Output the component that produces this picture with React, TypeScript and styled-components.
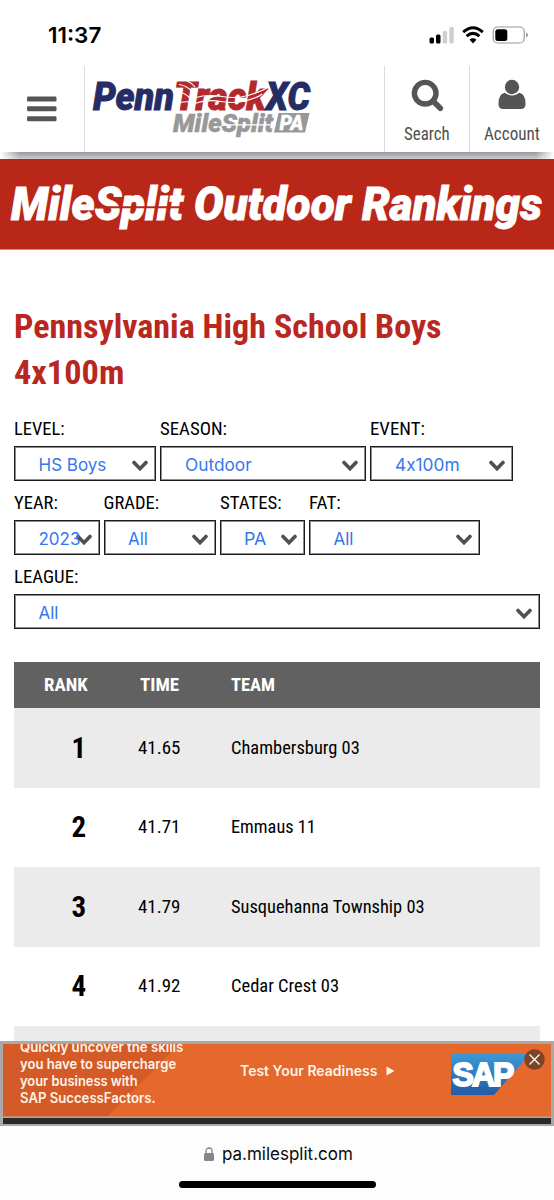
import React, { useLayoutEffect, useRef, useState } from "react";
import styled, { createGlobalStyle } from "styled-components";

const Global = createGlobalStyle`
  *, *::before, *::after { box-sizing: border-box; }
  body { margin: 0; background: #fff; overflow: hidden; }
`;

const condensed = `"Roboto Condensed", Roboto, sans-serif`;
const system = `Inter, "Liberation Sans", sans-serif`;

const Screen = styled.div`
  width: 554px;
  height: 1200px;
  display: flex;
  flex-direction: column;
  overflow: hidden;
  background: #fff;
  color: #111;
  font-family: ${condensed};
`;

const FitBox = styled.span<{ $width: number }>`
  display: block;
  flex: none;
  width: ${(p) => p.$width}px;
  white-space: nowrap;
`;

const FitInner = styled.span`
  display: inline-block;
  vertical-align: top;
  transform-origin: 0 50%;
`;

/* Sets a line of text to an exact measure by narrowing its glyphs. */
function Fit({ width, children }: { width: number; children: React.ReactNode }) {
  const ref = useRef<HTMLSpanElement>(null);
  const [scale, setScale] = useState(1);
  useLayoutEffect(() => {
    if (ref.current && ref.current.offsetWidth) setScale(width / ref.current.offsetWidth);
  }, [width]);
  return (
    <FitBox $width={width}>
      <FitInner ref={ref} style={{ transform: `scaleX(${scale})` }}>
        {children}
      </FitInner>
    </FitBox>
  );
}

const StatusBar = styled.div`
  flex: none;
  height: 66px;
  padding: 4px 26px 0 48px;
  display: flex;
  align-items: center;
  justify-content: space-between;
  font: 600 22px/28px ${system};
  color: #000;
`;

const Header = styled.header`
  flex: none;
  height: 86px;
  display: flex;
  position: relative;
  z-index: 1;
  background: #fff;
`;

const HeaderShadow = styled.div`
  flex: none;
  height: 7px;
  background: linear-gradient(90deg, #fff 0, transparent 20px, transparent 536px, #fff 554px),
    linear-gradient(#9a9aa2, #b4b4ba 55%, #d4cccc);
`;

const MenuButton = styled.button`
  width: 85px;
  padding: 0 0 1px 27px;
  border: 0;
  border-right: 1px solid #dcdce0;
  background: none;
  display: flex;
  align-items: center;
`;

const LogoLink = styled.div`
  flex: 1;
`;

const HeaderAction = styled.button`
  width: 85px;
  padding: 12px 0 0;
  border: 0;
  border-left: 1px solid #dcdce0;
  background: none;
  display: flex;
  flex-direction: column;
  align-items: center;
  gap: 10px;
  font: 400 18px/24px ${condensed};
  color: #505050;
`;

const Banner = styled.div`
  flex: none;
  height: 91px;
  background: #b92719;
  border-bottom: 1px solid #d98780;
`;

const Content = styled.main`
  height: 791px;
  flex: none;
  padding: 53px 14px 0;
  overflow: hidden;
`;

const Title = styled.h1`
  margin: 0;
  font: 700 34px/46px ${condensed};
  color: #b92720;
`;

const Filters = styled.form`
  padding-top: 19px;
`;

const FilterRow = styled.div`
  display: flex;
  gap: 4px;
  height: 74px;
`;

const Field = styled.label<{ $width: number }>`
  flex: none;
  width: ${(p) => p.$width}px;
  font: 400 18.5px/30px ${condensed};
  color: #000;
`;

const SelectBox = styled.span`
  display: flex;
  align-items: center;
  justify-content: space-between;
  height: 35px;
  margin-top: 2px;
  padding: 2px 7px 0 23.5px;
  border: 1px solid #1b1b1d;
  box-shadow: inset 0 0 0 1px rgba(27, 27, 29, 0.5);
  font: 400 17px/24px ${system};
  font-feature-settings: "calt" 0;
  color: #3577ee;
  svg { flex: none; margin: 2px 0 0 -8px; }
`;

const Table = styled.div`
  margin-top: 26px;
`;

const TableHead = styled.div`
  display: flex;
  align-items: center;
  height: 46px;
  background: #616161;
  color: #fff;
  font: 700 18px/24px ${condensed};
`;

const TableRow = styled.div<{ $shaded: boolean }>`
  display: flex;
  align-items: center;
  height: 79.5px;
  background: ${(p) => (p.$shaded ? "#ebebeb" : "#fff")};
  font: 400 18.5px/24px ${condensed};
  color: #000;
`;

const RankCell = styled.div<{ $inset?: number }>`
  display: flex;
  justify-content: center;
  flex: none;
  width: 104px;
  padding-left: ${(p) => p.$inset ?? 0}px;
`;

const TimeCell = styled.div`
  display: flex;
  justify-content: center;
  flex: none;
  width: 82px;
  margin-right: 31px;
`;

const TeamCell = styled.div`
  flex: 1;
`;

const Rank = styled.strong`
  font: 700 29px/32px ${condensed};
`;

const Ad = styled.aside`
  flex: none;
  height: 85px;
  padding: 3px 3px 0;
  background: #a9a9a9;
`;

const AdBody = styled.div`
  height: 73px;
  position: relative;
  overflow: hidden;
  display: flex;
  border-bottom: 1px solid #c08a6c;
  background: linear-gradient(135deg, #d45b27 0, #d45b27 124px, #e5682c 126px);
  color: #fff3e8;
  font: 600 14px/17px ${system};
`;

const AdCopy = styled.div`
  width: 220px;
  padding-left: 17px;
  margin-top: -6.5px;
`;

const AdAction = styled.div`
  width: 228px;
  padding: 18px 0 0 17px;
  display: flex;
  gap: 9px;
  svg { margin-top: 4px; }
`;

const AdSap = styled.div`
  padding-top: 9px;
`;

const AdFoot = styled.div`
  height: 6px;
  margin-top: 1px;
  background: #292929;
`;

const CloseButton = styled.button`
  position: absolute;
  right: 6px;
  top: 5px;
  width: 21px;
  height: 21px;
  padding: 0;
  border: 0;
  background: none;
`;

const BrowserBar = styled.footer`
  flex: 1;
  padding-top: 15px;
  display: flex;
  flex-direction: column;
  align-items: center;
  background: #fdfdfd;
`;

const Address = styled.div`
  display: flex;
  align-items: center;
  gap: 8px;
  padding-left: 2px;
  font: 400 17.5px/26px ${system};
  color: #0b0b0b;
`;

const HomeIndicator = styled.div`
  width: 197px;
  height: 7px;
  margin-top: 14px;
  border-radius: 4px;
  background: #000;
`;

const Chevron = () => (
  <svg width="16" height="12" viewBox="0 0 16 12">
    <path d="M2 2.5 8 8.7 14 2.5" fill="none" stroke="#505050" strokeWidth="3.6" strokeLinecap="round" />
  </svg>
);

type LetterProps = { x: number; y: number; w: number; size: number; fill: string; weight?: number; children: string };
const Letters = ({ x, y, w, size, fill, weight = 0.5, children }: LetterProps) => (
  <text x={x} y={y} textLength={w} lengthAdjust="spacingAndGlyphs" fill={fill} stroke={fill} strokeWidth={weight} fontFamily="Roboto, sans-serif" fontWeight="900" fontStyle="italic" fontSize={size}>
    {children}
  </text>
);

const SiteLogo = () => (
  <svg width="299" height="86" viewBox="85 66 299 86" display="block">
    <Letters x={93} y={109.9} w={81} size={39} weight={0.9} fill="#252c66">Penn</Letters>
    <Letters x={174} y={109.9} w={92} size={39} weight={0.9} fill="#b3282c">Track</Letters>
    <Letters x={266} y={109.9} w={44} size={39} weight={0.9} fill="#252c66">XC</Letters>
    <g fill="none" stroke="#fff" strokeWidth="1.1">
      <path d="M179 84.500q8 1 14 8M187 81q5 2 8 6M177 92q7 0 13 6" />
      <path d="M176 104q7-3 14-2M194 98q14-4 28-1.500t26-1T267 88" />
      <path d="M193 104q14-5 28-2.500t26-1T262 94" />
    </g>
    <Letters x={173} y={131.5} w={100} size={26} fill="#989898">MileSplit</Letters>
    <path d="M222 124.800h52" stroke="#fff" strokeWidth="1.300" />
    <path d="M278.500 113h31l-4.500 19.500h-31z" fill="#989898" />
    <Letters x={279.500} y={129.500} w={24} size={19.500} weight={0.3} fill="#fff">PA</Letters>
  </svg>
);

const BannerTitle = () => (
  <svg width="554" height="90" viewBox="0 159 554 90" display="block">
    <Letters x={11} y={219.900} w={172} size={46} weight={0.900} fill="#fff">MileSplit</Letters>
    <path d="M97 207.300h87" stroke="#b92719" strokeWidth="2" />
    <Letters x={194} y={219.900} w={157} size={46} weight={0.900} fill="#fff">Outdoor</Letters>
    <Letters x={362} y={219.900} w={180} size={46} weight={0.900} fill="#fff">Rankings</Letters>
  </svg>
);

const StatusIcons = () => (
  <svg width="100" height="20" viewBox="428 25 100 20">
    <rect x="429.500" y="37.500" width="4.500" height="6" rx="1.500" />
    <rect x="436" y="34.500" width="4.500" height="9" rx="1.500" />
    <rect x="442.700" y="31" width="4.500" height="12.500" rx="1.500" fill="#cfcfcf" />
    <rect x="449.300" y="27" width="4.500" height="16.500" rx="1.500" fill="#cfcfcf" />
    <g fill="none" stroke="#000" strokeWidth="3">
      <path d="M463.200 32.200q9.800-8.800 19.600 0" />
      <path d="M466.600 36.200q6.400-5.600 12.800 0" />
    </g>
    <path d="M469.500 39.700q3.500-2.800 7 0L473 43.500z" />
    <rect x="493.200" y="27" width="31" height="16" rx="4.500" fill="none" stroke="#999" strokeWidth="1.200" />
    <rect x="495.300" y="29.200" width="12" height="11.700" rx="2.500" />
    <path d="M526 32.500q2 .7 2 2.500t-2 2.500z" fill="#999" />
  </svg>
);

const SapLogo = () => (
  <svg width="80" height="42" viewBox="0 0 80 42" display="block">
    <defs>
      <linearGradient id="sapBlue" x1="0" y1="0" x2="0" y2="1">
        <stop offset="0" stopColor="#3d9bd6" />
        <stop offset="1" stopColor="#235ba6" />
      </linearGradient>
    </defs>
    <path d="M0 0h80L43 42H0z" fill="url(#sapBlue)" />
    <text x="1.500" y="33" textLength="60" lengthAdjust="spacingAndGlyphs" fill="#fff" stroke="#fff" strokeWidth="2" fontFamily="Liberation Sans, sans-serif" fontWeight="700" fontSize="34" letterSpacing="-2">SAP</text>
  </svg>
);

type FilterDef = { label: string; lw: number; value: string; vw: number; width: number };
const filters: FilterDef[][] = [
  [
    { label: "LEVEL:", lw: 51, value: "HS Boys", vw: 68, width: 142 },
    { label: "SEASON:", lw: 67, value: "Outdoor", vw: 67, width: 206 },
    { label: "EVENT:", lw: 55, value: "4x100m", vw: 65, width: 142.5 },
  ],
  [
    { label: "YEAR:", lw: 44, value: "2023", vw: 42, width: 85.5 },
    { label: "GRADE:", lw: 56, value: "All", vw: 20, width: 112 },
    { label: "STATES:", lw: 62, value: "PA", vw: 22, width: 85.5 },
    { label: "FAT:", lw: 32, value: "All", vw: 20, width: 171 },
  ],
  [{ label: "LEAGUE:", lw: 64, value: "All", vw: 20, width: 526 }],
];

const results = [
  { time: "41.65", team: "Chambersburg 03", w: 128.5 },
  { time: "41.71", team: "Emmaus 11", w: 85 },
  { time: "41.79", team: "Susquehanna Township 03", w: 194 },
  { time: "41.92", team: "Cedar Crest 03", w: 108 },
];

export default function App() {
  return (
    <Screen>
      <Global />
      <StatusBar>
        <Fit width={53}>11:37</Fit>
        <StatusIcons />
      </StatusBar>
      <Header>
        <MenuButton aria-label="Menu">
          <svg width="30" height="26" viewBox="0 0 30 26" fill="#555">
            <rect y=".5" width="29.500" height="5" rx="1.300" />
            <rect y="10.300" width="29.500" height="5" rx="1.300" />
            <rect y="20.200" width="29.500" height="5" rx="1.300" />
          </svg>
        </MenuButton>
        <LogoLink><SiteLogo /></LogoLink>
        <HeaderAction>
          <svg width="33" height="34" viewBox="0 0 33 34" fill="none" stroke="#555">
            <circle cx="14.200" cy="15.200" r="10.800" strokeWidth="5.400" />
            <path d="m22.500 23.500 6.800 6.800" strokeWidth="5.600" strokeLinecap="round" />
          </svg>
          <Fit width={46}>Search</Fit>
        </HeaderAction>
        <HeaderAction>
          <svg width="28" height="34" viewBox="0 0 28 34" fill="#555">
            <circle cx="14" cy="9" r="7.200" />
            <path d="M6.500 14.800q7.500 5.400 15 0Q27.500 16 27.500 26q0 5-4.500 5H5q-4.500 0-4.500-5 0-10 6-11.200z" />
          </svg>
          <Fit width={56}>Account</Fit>
        </HeaderAction>
      </Header>
      <HeaderShadow />
      <Banner><BannerTitle /></Banner>
      <Content>
        <Title>
          <Fit width={428}>Pennsylvania High School Boys</Fit>
          <Fit width={110}>4x100m</Fit>
        </Title>
        <Filters>
          {filters.map((row, i) => (
            <FilterRow key={i}>
              {row.map((f) => (
                <Field key={f.label} $width={f.width}>
                  <Fit width={f.lw}>{f.label}</Fit>
                  <SelectBox>
                    <Fit width={f.vw}>{f.value}</Fit>
                    <Chevron />
                  </SelectBox>
                </Field>
              ))}
            </FilterRow>
          ))}
        </Filters>
        <Table>
          <TableHead>
            <RankCell><Fit width={44}>RANK</Fit></RankCell>
            <TimeCell><Fit width={39}>TIME</Fit></TimeCell>
            <TeamCell><Fit width={44}>TEAM</Fit></TeamCell>
          </TableHead>
          {results.map((r, i) => (
            <TableRow key={r.team} $shaded={i % 2 === 0}>
              <RankCell $inset={26}><Rank><Fit width={15}>{i + 1}</Fit></Rank></RankCell>
              <TimeCell><Fit width={42}>{r.time}</Fit></TimeCell>
              <TeamCell><Fit width={r.w}>{r.team}</Fit></TeamCell>
            </TableRow>
          ))}
          <TableRow $shaded />
        </Table>
      </Content>
      <Ad>
        <AdBody>
          <AdCopy>
            <Fit width={163}>Quickly uncover the skills</Fit>
            <Fit width={156}>you have to supercharge</Fit>
            <Fit width={118}>your business with</Fit>
            <Fit width={136}>SAP SuccessFactors.</Fit>
          </AdCopy>
          <AdAction>
            <Fit width={137}>Test Your Readiness</Fit>
            <svg width="9" height="10" viewBox="0 0 9 10"><path d="M.5.500 8.500 5 .5 9.500z" fill="#fff3e8" /></svg>
          </AdAction>
          <AdSap><SapLogo /></AdSap>
          <CloseButton aria-label="Close">
            <svg width="21" height="21" viewBox="0 0 21 21" display="block">
              <circle cx="10.500" cy="10.500" r="10.200" fill="#7d4428" />
              <path d="m5.500 5.500 10 10m0-10-10 10" stroke="#fff" strokeWidth="1.300" />
            </svg>
          </CloseButton>
        </AdBody>
        <AdFoot />
      </Ad>
      <BrowserBar>
        <Address>
          <svg width="10" height="14" viewBox="0 0 10 14">
            <rect y="6" width="10" height="8" rx="1.500" fill="#85858a" />
            <path d="M2 7V4a3 3 0 0 1 6 0v3" fill="none" stroke="#85858a" strokeWidth="1.300" />
          </svg>
          <Fit width={131}>pa.milesplit.com</Fit>
        </Address>
        <HomeIndicator />
      </BrowserBar>
    </Screen>
  );
}
